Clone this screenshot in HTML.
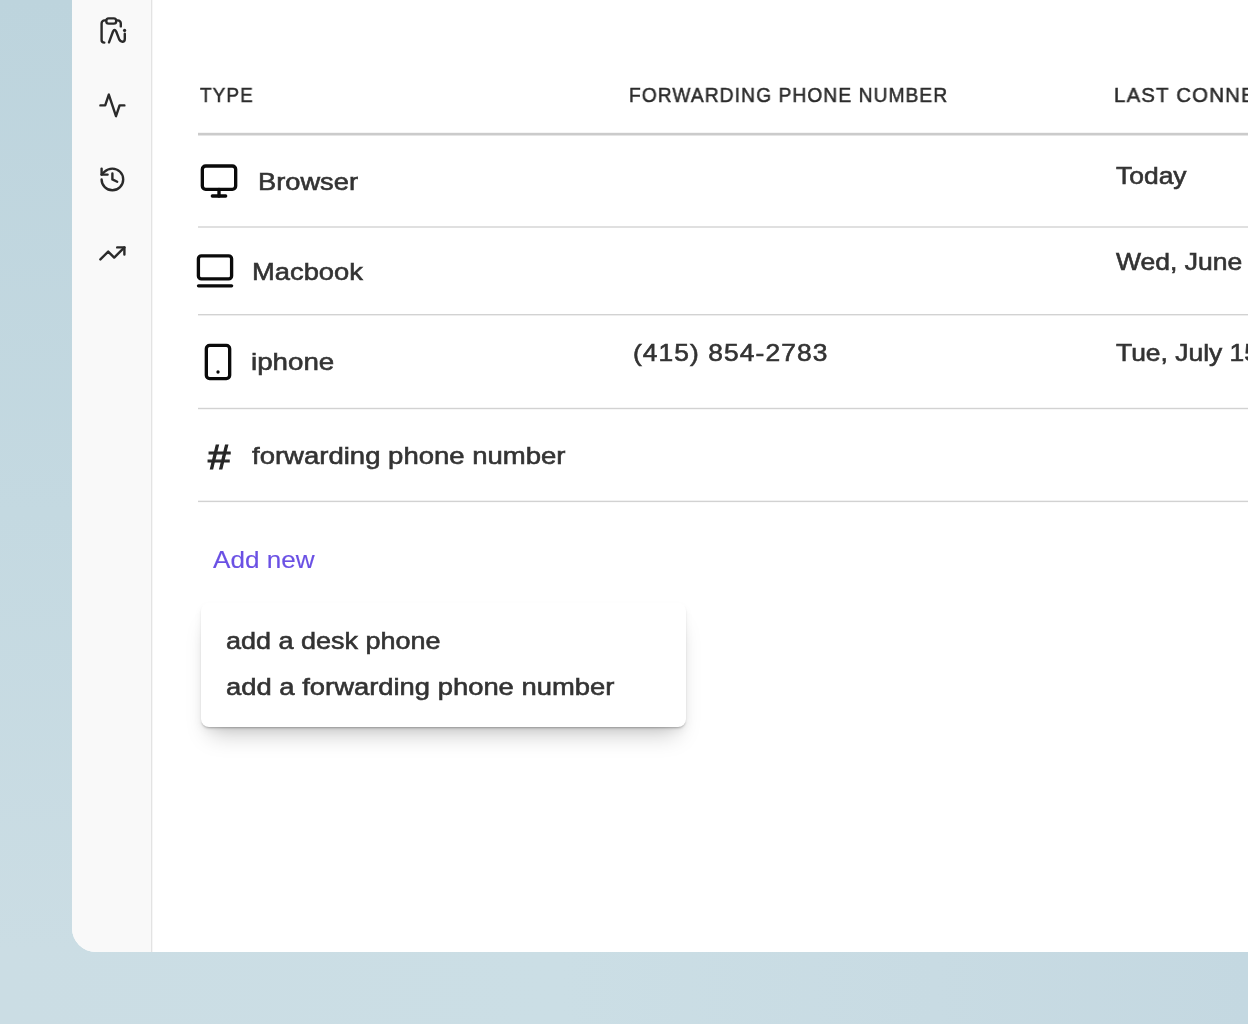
<!DOCTYPE html>
<html lang="en">
<head>
<meta charset="utf-8">
<title>Devices</title>
<style>
*{box-sizing:border-box;margin:0;padding:0}
html,body{width:1248px;height:1024px;overflow:hidden}
body{position:relative;font-family:"Liberation Sans",sans-serif;background:linear-gradient(to bottom,#bdd4dd 0%,#c4d9e1 50%,#cbdde4 93%,#cbdde4 100%)}
.card{position:absolute;left:72px;top:-40px;width:1300px;height:992px;background:#fff;border-radius:0 0 0 24px;overflow:hidden}
.side{position:absolute;left:0;top:0;width:81px;height:100%;background:linear-gradient(to right,#f9f9f9 0,#f9f9f9 79px,#e3e3e3 79px,#e3e3e3 80px,#f6f6f6 80px,#f6f6f6 81px)}
.page{position:absolute;left:0;top:0;width:1248px;height:1024px;overflow:hidden}
.t{position:absolute;white-space:nowrap;line-height:1;transform-origin:0 0;display:block;will-change:transform;-webkit-text-stroke:.6px currentColor}
svg{position:absolute;overflow:visible}
.nav svg{fill:none;stroke:#2a2a2a;stroke-width:2.4;stroke-linecap:round;stroke-linejoin:round}
.ico{fill:none;stroke:#0a0a0a;stroke-width:3.33;stroke-linecap:round;stroke-linejoin:round}
.hl{position:absolute;left:198px;right:0}
.thead .hl{top:132px;height:4px;background:linear-gradient(to bottom,#f5f5f5 0px,#f5f5f5 1px,#cbcbcb 1px,#cbcbcb 2px,#cbcbcb 2px,#cbcbcb 3px,#e5e5e5 3px,#e5e5e5 4px)}
.sep{position:absolute;left:198px;right:0}
.foot{position:absolute;left:0;top:952px;width:1248px;height:72px;background:linear-gradient(to right,#cbdde4 0%,#cbdee5 45%,#c8dbe3 75%,#c4d8e1 100%)}
.hash{will-change:transform;position:absolute;white-space:nowrap;line-height:1;transform-origin:0 0;color:#262626;-webkit-text-stroke:1.1px currentColor;transform:scaleX(1.13)}
.menu{position:absolute;left:201px;top:603px;width:484.5px;height:124px;background:#fff;border-radius:8px;box-shadow:0 2px 2.5px -1px rgba(0,0,0,.3),0 16px 22px -9px rgba(0,0,0,.21),0 4px 8px rgba(0,0,0,.05)}
#h1{left:200.43px;top:84.41px;font-size:21px;color:#2b2b2b;transform:scaleX(0.9013);-webkit-text-stroke:.5px currentColor;letter-spacing:1.2px}
#h2{left:629.46px;top:84.41px;font-size:21px;color:#2b2b2b;transform:scaleX(0.9132);-webkit-text-stroke:.5px currentColor;letter-spacing:1.2px}
#h3{left:1113.58px;top:84.41px;font-size:21px;color:#2b2b2b;transform:scaleX(0.9728);-webkit-text-stroke:.5px currentColor;letter-spacing:1.2px}
#r1{left:258.13px;top:170.10px;font-size:24.5px;color:#333;transform:scaleX(1.1127);}
#d1{left:1116.00px;top:163.70px;font-size:24.5px;color:#333;transform:scaleX(1.0793);}
#r2{left:251.89px;top:259.50px;font-size:24.5px;color:#333;transform:scaleX(1.1156);}
#d2{left:1116.03px;top:250.30px;font-size:24.5px;color:#333;transform:scaleX(1.0821);}
#r3{left:251.06px;top:350.00px;font-size:24.5px;color:#333;transform:scaleX(1.1318);}
#p3{left:633.26px;top:341.40px;font-size:24.5px;color:#333;transform:scaleX(1.0764);letter-spacing:1px}
#d3{left:1115.57px;top:341.10px;font-size:24.5px;color:#333;transform:scaleX(1.0786);}
#r4{left:252.47px;top:443.60px;font-size:24.5px;color:#333;transform:scaleX(1.1228);}
#an{left:213.34px;top:547.70px;font-size:24.5px;color:#6a50e4;transform:scaleX(1.0652);-webkit-text-stroke:.15px currentColor}
#m1{left:25.03px;top:26.30px;font-size:24.5px;color:#333;transform:scaleX(1.1018);}
#m2{left:24.93px;top:72.20px;font-size:24.5px;color:#333;transform:scaleX(1.1181);}

</style>
</head>
<body>
<div class="foot"></div>
<div class="card">
  <aside class="side"></aside>
</div>
<div class="page">
  <nav class="nav">
    <svg style="left:92px;top:10px" width="40" height="40" viewBox="92 10 40 40">
      <path d="M104.3 42.6C102.5 42.6 101.6 41.5 101.6 40V23.4A3 3 0 0 1 104.6 20.4H106"/>
      <rect x="106.3" y="18.4" width="9.9" height="5.2" rx="2.4"/>
      <path d="M116.5 20.4H117.8A3 3 0 0 1 120.8 23.4V26.4"/>
      <path d="M109 42.4L113 31.5Q114.5 28.6 116.2 31.5L119.3 39.7Q120.5 41.8 122.3 41.8Q124.8 41.8 124.8 38.9V33.8"/>
      <circle cx="124.6" cy="30.4" r="1.65" fill="#2a2a2a" stroke="none"/>
    </svg>
    <svg style="left:97.8px;top:90.95px" width="28.8" height="28.8" viewBox="0 0 24 24" stroke-width="2">
      <path d="M22 12h-4l-3 9L9 3l-3 9H2" stroke-width="2"/>
    </svg>
    <svg style="left:98px;top:165px" width="28.8" height="28.8" viewBox="0 0 24 24">
      <g stroke-width="2"><path d="M3 12a9 9 0 1 0 9-9 9.75 9.75 0 0 0-6.74 2.74L3 8"/><path d="M3 3v5h5"/><path d="M12 7v5l4 2"/></g>
    </svg>
    <svg style="left:97.8px;top:238.8px" width="28.8" height="28.8" viewBox="0 0 24 24">
      <g stroke-width="2"><polyline points="22 7 13.5 15.5 8.5 10.5 2 17"/><polyline points="16 7 22 7 22 13"/></g>
    </svg>
  </nav>
  <main>
    <div class="thead">
      <span class="t" id="h1">TYPE</span><span class="t" id="h2">FORWARDING PHONE NUMBER</span><span class="t" id="h3">LAST CONNECTED</span>
      <div class="hl"></div>
    </div>
    <div class="row">
      <svg class="ico" style="left:199.2px;top:161.1px" width="40" height="40" viewBox="0 0 24 24"><g stroke-width="2"><rect x="2" y="3" width="20" height="14" rx="2"/><line x1="8" y1="21" x2="16" y2="21"/><line x1="12" y1="17" x2="12" y2="21"/></g></svg>
      <span class="t" id="r1">Browser</span><span class="t" id="d1">Today</span>
      <div class="sep" style="top:226px;height:2px;background:linear-gradient(to bottom,#e0e0e0 0px,#e0e0e0 1px,#e0e0e0 1px,#e0e0e0 2px)"></div>
    </div>
    <div class="row">
      <svg class="ico" style="left:190px;top:250px" width="50" height="40" viewBox="190 250 50 40"><rect x="198.4" y="255.8" width="33.2" height="23.1" rx="3"/><line x1="198.5" y1="285.8" x2="231.6" y2="285.8"/></svg>
      <span class="t" id="r2">Macbook</span><span class="t" id="d2">Wed, June 25</span>
      <div class="sep" style="top:314px;height:2px;background:linear-gradient(to bottom,#d2d2d2 0px,#d2d2d2 1px,#ededed 1px,#ededed 2px)"></div>
    </div>
    <div class="row">
      <svg class="ico" style="left:198px;top:341.7px" width="40" height="40" viewBox="0 0 24 24"><g stroke-width="2"><rect x="5" y="2" width="14" height="20" rx="2"/><path d="M12 18h.01"/></g></svg>
      <span class="t" id="r3">iphone</span><span class="t" id="p3">(415) 854-2783</span><span class="t" id="d3">Tue, July 15</span>
      <div class="sep" style="top:407px;height:3px;background:linear-gradient(to bottom,#f6f6f6 0px,#f6f6f6 1px,#d2d2d2 1px,#d2d2d2 2px,#f6f6f6 2px,#f6f6f6 3px)"></div>
    </div>
    <div class="row">
      <span class="hash" id="hash" style="left:207.6px;top:439.6px;font-size:35.5px">#</span>
      <span class="t" id="r4">forwarding phone number</span>
      <div class="sep" style="top:500px;height:3px;background:linear-gradient(to bottom,#f1f1f1 0px,#f1f1f1 1px,#d2d2d2 1px,#d2d2d2 2px,#fafafa 2px,#fafafa 3px)"></div>
    </div>
    <span class="t" id="an">Add new</span>
    <div class="menu">
      <span class="t" id="m1">add a desk phone</span>
      <span class="t" id="m2">add a forwarding phone number</span>
    </div>
  </main>
</div>
</body>
</html>
